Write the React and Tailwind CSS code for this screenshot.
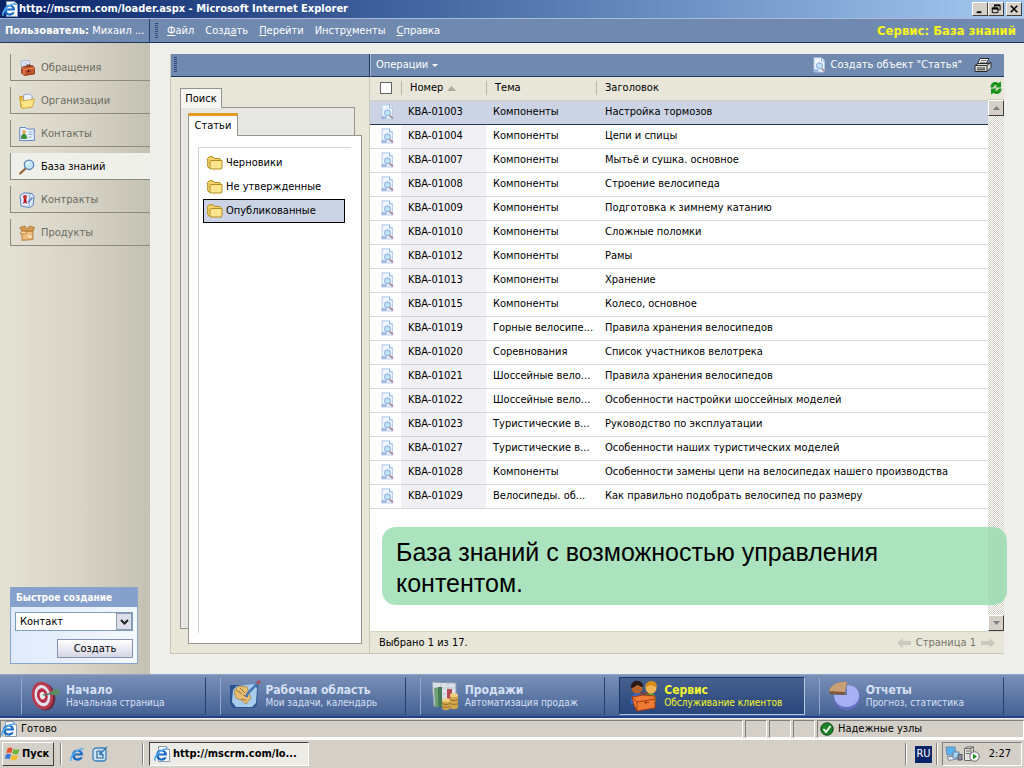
import React, { useState } from 'react';

const sections = [
  { label: 'Обращения', Icon: CaseIcon },
  { label: 'Организации', Icon: OpenFolderIcon },
  { label: 'Контакты', Icon: ContactIcon },
  { label: 'База знаний', Icon: LensIcon },
  { label: 'Контракты', Icon: ContractIcon },
  { label: 'Продукты', Icon: BoxIcon },
];

const folders = ['Черновики', 'Не утвержденные', 'Опубликованные'];

const articles = [
  ['KBA-01003', 'Компоненты', 'Настройка тормозов'],
  ['KBA-01004', 'Компоненты', 'Цепи и спицы'],
  ['KBA-01007', 'Компоненты', 'Мытьё и сушка. основное'],
  ['KBA-01008', 'Компоненты', 'Строение велосипеда'],
  ['KBA-01009', 'Компоненты', 'Подготовка к зимнему катанию'],
  ['KBA-01010', 'Компоненты', 'Сложные поломки'],
  ['KBA-01012', 'Компоненты', 'Рамы'],
  ['KBA-01013', 'Компоненты', 'Хранение'],
  ['KBA-01015', 'Компоненты', 'Колесо, основное'],
  ['KBA-01019', 'Горные велосипе...', 'Правила хранения велосипедов'],
  ['KBA-01020', 'Соревнования', 'Список участников велотрека'],
  ['KBA-01021', 'Шоссейные вело...', 'Правила хранения велосипедов'],
  ['KBA-01022', 'Шоссейные вело...', 'Особенности настройки шоссейных моделей'],
  ['KBA-01023', 'Туристические в...', 'Руководство по эксплуатации'],
  ['KBA-01027', 'Туристические в...', 'Особенности наших туристических моделей'],
  ['KBA-01028', 'Компоненты', 'Особенности замены цепи на велосипедах нашего производства'],
  ['KBA-01029', 'Велосипеды. об...', 'Как правильно подобрать велосипед по размеру'],
];

const areas = [
  { title: 'Начало', note: 'Начальная страница', Icon: TargetIcon },
  { title: 'Рабочая область', note: 'Мои задачи, календарь', Icon: DeskIcon },
  { title: 'Продажи', note: 'Автоматизация продаж', Icon: SalesIcon },
  { title: 'Сервис', note: 'Обслуживание клиентов', Icon: PeopleIcon },
  { title: 'Отчеты', note: 'Прогноз, статистика', Icon: PieIcon },
];

function IeIcon({ page = true }) {
  return (
    <svg viewBox="0 0 16 16" className="size-4 shrink-0">
      {page && <path d="M4.500.5h8L15.500 3.500v12h-11z" fill="#fff" stroke="#8a98b4" />}
      {page && <path d="M12.500.5v3h3" fill="#d4e0f4" stroke="#8a98b4" />}
      <path d="M13 9.500H4.700c.2 3.300 4 3.800 5.200 1.800h2.800C11 16.500 2 15.500 2 9.200 2 2 13.600 2 13 9.500zM4.900 7.500h5.200c-.3-2.600-4.900-2.600-5.200 0z" fill="#1c6cc8" />
      <path d="M1.500 14.800C-1.200 11.500 7 2.200 13.500 3.200" fill="none" stroke="#56aef0" strokeWidth="1.500" />
    </svg>
  );
}

function CaseIcon() {
  return (
    <svg viewBox="0 0 16 16" className="size-4 shrink-0">
      <path d="M2 1l8-.5 1.500 9L3 11z" fill="#f2f6ff" stroke="#90a4cc" strokeWidth=".8" />
      <path d="M3.500 3h5M4 5h5" stroke="#a8b8d8" />
      <path d="M3 7l10.500-1.500L15.500 8v6L5 15.500 2.500 13z" fill="#c4542a" stroke="#7c2c14" strokeWidth=".8" />
      <path d="M3 7l2 2.500L15.500 8M5 9.500v6" fill="none" stroke="#ec9462" />
      <path d="M8 6.500V5h3v1.200M9.500 9.500v3M8 11.200h3.500" fill="none" stroke="#5c1c10" />
    </svg>
  );
}

function OpenFolderIcon() {
  return (
    <svg viewBox="0 0 16 16" className="size-4 shrink-0">
      <path d="M.8 3.500h4l1.500 1.500H13v9H2z" fill="#ecb93c" stroke="#c08c1c" strokeWidth=".8" />
      <path d="M4.500 2l6-1 2.500 2.500v7.500H5z" fill="#edf3ff" stroke="#8098cc" strokeWidth=".8" />
      <path d="M3.500 8L15.500 6 13.500 14 3 15.500.8 5.500z" fill="#fce688" stroke="#d09c28" strokeWidth=".8" />
    </svg>
  );
}

function ContactIcon() {
  return (
    <svg viewBox="0 0 16 16" className="size-4 shrink-0">
      <path d="M.8 1.500h6l1 1.500h7.500v11.500H.8z" fill="#e6f0ff" stroke="#6488c4" />
      <path d="M9.500 6h4M9.500 8.500h4M9.500 11h3" stroke="#8cacdc" />
      <circle cx="5" cy="5.800" r="1.900" fill="#e8a848" />
      <path d="M2.300 12.500c0-6 5.400-6 5.400 0z" fill="#3c9830" stroke="#24681c" strokeWidth=".6" />
    </svg>
  );
}

function LensIcon() {
  return (
    <svg viewBox="0 0 16 16" className="size-4 shrink-0">
      <path d="M6.500 9.500L1.200 14.500" stroke="#9c6434" strokeWidth="2.200" strokeLinecap="round" />
      <circle cx="10" cy="5.800" r="4.700" fill="#c4e6fa" stroke="#5c84b4" strokeWidth="1.300" />
      <path d="M7.500 5.500c.4-1.600 1.600-2.200 3-2" fill="none" stroke="#fff" strokeWidth="1.200" />
    </svg>
  );
}

function ContractIcon() {
  return (
    <svg viewBox="0 0 16 16" className="size-4 shrink-0">
      <path d="M1 3.500L5 .8l8 .7 2 3-1 9-4 2-8-1.500z" fill="#dfeafc" stroke="#5c80c0" />
      <path d="M11 2l-1 12" stroke="#88a8dc" />
      <circle cx="6" cy="5" r="2" fill="#cc2c2c" />
      <path d="M5 6.500h2.200L8 12l-2-1.300L4.200 12z" fill="#b41c24" />
      <path d="M9 10.500l4.500-5" stroke="#5878b0" strokeWidth="1.200" />
    </svg>
  );
}

function BoxIcon() {
  return (
    <svg viewBox="0 0 16 16" className="size-4 shrink-0">
      <path d="M3 6h11v8.500L3 15.300z" fill="#edbd7c" stroke="#a8702c" strokeWidth=".8" />
      <path d="M3 6L.8 2.500 6 1l2 3.500L10.500 1l5 1.500L14 6z" fill="#d89a50" stroke="#a8702c" strokeWidth=".8" />
      <path d="M1 8.500L3 6l5 .5L6.500 9z" fill="#f8d8a0" stroke="#a8702c" strokeWidth=".7" />
      <path d="M9 11.500h3.500" stroke="#fff0d0" strokeWidth="1.500" />
    </svg>
  );
}

function FolderIcon() {
  return (
    <svg viewBox="0 0 16 14" className="h-3.5 w-4 shrink-0">
      <path d="M.7 10.500V2.200L2 .8h4l1.300 1.700h5.500L14 4v7.500l-1 1H2.500z" fill="#f4d468" stroke="#b48c20" />
      <path d="M3 12.500V5.200l1-.7h11v7.500l-1 1H3.500z" fill="#fbe58c" stroke="#b48c20" />
    </svg>
  );
}

function ArticleIcon() {
  return (
    <svg viewBox="0 0 16 16" className="size-4 shrink-0">
      <path d="M3 .8h7.500L13.500 4v11H3z" fill="#ecf4fd" stroke="#b4c8e4" strokeWidth=".9" />
      <path d="M10.500.8V4h3" fill="#fff" stroke="#8cacd8" strokeWidth=".9" />
      <path d="M10.500 11.500l3.500 3" stroke="#a89098" strokeWidth="1.800" />
      <circle cx="8.500" cy="8.800" r="3" fill="#c0e4fa" stroke="#84a8d4" />
      <path d="M2.500 13.500h5" stroke="#84a8dc" strokeWidth="2" />
    </svg>
  );
}

function PrinterIcon() {
  return (
    <svg viewBox="0 0 18 16" className="h-4 w-[18px]">
      <path d="M6 1.500h9L12 7H3.500z" fill="#fff" stroke="#282828" />
      <path d="M7 3.500h5.500M6 5.300h5.500" stroke="#555" strokeWidth=".8" />
      <path d="M1 8.500L4 6.500h10l3-1v5l-4 4H1z" fill="#d8d8d0" stroke="#282828" />
      <path d="M1 8.500h12l4-3M13 8.500v6M3 11h8M3 12.800h8" fill="none" stroke="#383838" />
    </svg>
  );
}

function RefreshIcon() {
  return (
    <svg viewBox="0 0 12 14" className="h-3.5 w-3">
      <path d="M.5 6.500C.5 1 5.500 0 8.500 2L11 .5V6.500H5l1.800-1.800C5 3.800 4 4.800 3.500 6.500z" fill="#18941c" />
      <path d="M11.500 7.500c0 5.500-5 6.500-8 4.500L1 13.500V7.500h6L5.200 9.300C7 10.200 8 9.200 8.500 7.500z" fill="#18941c" />
    </svg>
  );
}

function TargetIcon() {
  return (
    <svg viewBox="0 0 32 32" className="size-8 shrink-0">
      <g transform="rotate(-12 13 16)">
        <ellipse cx="14.500" cy="17" rx="10.500" ry="14" fill="#6c2840" />
        <ellipse cx="12.500" cy="15.500" rx="10.500" ry="14" fill="#b83c50" />
        <ellipse cx="12.500" cy="15.500" rx="7.800" ry="10.800" fill="#e4e0ec" />
        <ellipse cx="12.500" cy="15.500" rx="5.300" ry="7.500" fill="#b83048" />
        <ellipse cx="12.500" cy="15.500" rx="2.600" ry="3.800" fill="#f0e4ec" />
      </g>
      <path d="M13 15l12-2" stroke="#50806c" strokeWidth="1.600" />
      <path d="M20 13l3-3 7-1-1.500 2.500L30 14l-7 1.500z" fill="#5c8c60" />
    </svg>
  );
}

function DeskIcon() {
  return (
    <svg viewBox="0 0 32 32" className="size-8 shrink-0">
      <path d="M1 5h28l-1 20-3 3H4L1 24z" fill="#2c5490" />
      <path d="M8 6l17-2 3 4-1 15-4 4H7l-4-5 1-12z" fill="#a8ccec" />
      <path d="M5 11l5-5 8 1 2 6 2 5-5 6-5-4-5-2z" fill="#e4be74" stroke="#a8803c" strokeWidth=".8" />
      <path d="M7 10l6 4M11 8l5 5M12 19l5 1M14 15l5 2" stroke="#98703c" />
      <path d="M29 3L19 13l-2 4" fill="none" stroke="#4478b8" strokeWidth="2.600" />
      <path d="M31 1l-3 3" stroke="#a85058" strokeWidth="3" />
    </svg>
  );
}

function SalesIcon() {
  return (
    <svg viewBox="0 0 32 32" className="size-8 shrink-0">
      <path d="M3 2l24 1v24L5 26z" fill="#dce0e8" stroke="#8c98ac" />
      <path d="M4 8h22M4 14h22M5 20h21M12 3v23M19 3v23" stroke="#b4bccc" strokeWidth=".7" />
      <path d="M5 8l7-1v20H6z" fill="#6ea078" />
      <path d="M9 7h4v20H9z" fill="#447c54" />
      <path d="M18 9h5v12h-5z" fill="#b84c54" />
      <path d="M13 20v8c0 3 8 3 8 0v-8zM21 15v12c0 3 8 3 8 0V15z" fill="#d0a44c" />
      <path d="M13 23c0 2 8 2 8 0m-8 3c0 2 8 2 8 0m0-7c0 2 8 2 8 0m-8 4c0 2 8 2 8 0" fill="none" stroke="#94702c" />
      <ellipse cx="17" cy="20" rx="4" ry="2" fill="#f0d084" />
      <ellipse cx="25" cy="15" rx="4" ry="2" fill="#f0d084" />
    </svg>
  );
}

function PeopleIcon() {
  return (
    <svg viewBox="0 0 32 32" className="size-8 shrink-0">
      <path d="M3 24c-3-14 14-15 13-2z" fill="#3864c0" />
      <path d="M16 24c-2-15 14-14 12-2z" fill="#50a040" />
      <circle cx="9" cy="8" r="5.500" fill="#b86430" />
      <path d="M3 8c-1-10 13-9 12-1-3 0-4-2-6-2-2 1-3 3-6 3z" fill="#281818" />
      <circle cx="23" cy="8" r="5.500" fill="#f0b458" />
      <path d="M17 7c1-8 12-8 12 0-3 0-5-2-7-2-1 1-3 2-5 2z" fill="#d88c1c" />
      <path d="M4 17l11-2 12 1v12L9 31l-3-6z" fill="#ee7c34" stroke="#a43c14" />
      <path d="M4 17l5 5 18-3M9 22v9M13 15v-2h7v2M18 20v4M16 22.500h5" fill="none" stroke="#a43c14" />
    </svg>
  );
}

function PieIcon() {
  return (
    <svg viewBox="0 0 34 32" className="h-8 w-[34px] shrink-0">
      <path d="M6 17c0 18 27 17 26-1-1-7-6-10-13-10v11z" fill="#6470c0" />
      <path d="M6 15c0 17 27 15 25-1-1-6-6-9-12-9v10z" fill="#a8b0f4" />
      <path d="M1 11C3 5 10 1 19 2l-2 10v3L2 14z" fill="#80583c" />
      <path d="M1 11C3 5 10 1 19 2l-2 10z" fill="#c8a078" />
    </svg>
  );
}

function TitleBar() {
  return (
    <header className="flex h-[18px] items-center bg-linear-to-r from-[#0a246a] to-[#a6caf0] pl-0.5 text-white">
      <IeIcon />
      <h1 className="ml-px flex-1 truncate text-[11px] font-bold">http://mscrm.com/loader.aspx - Microsoft Internet Explorer</h1>
      <div className="flex pr-0.5">
        <WindowButton label="Свернуть"><path d="M3 9h5v2H3z" fill="#000" /></WindowButton>
        <WindowButton label="Восстановить">
          <path d="M5 2.500h6v5H9M5 2v3M2.500 5.500h6v5h-6z" fill="none" stroke="#000" />
          <path d="M4.500 2.500H11M2 6h7" stroke="#000" strokeWidth="2" />
        </WindowButton>
        <span className="w-0.5" />
        <WindowButton label="Закрыть"><path d="M3 3l7 7M10 3l-7 7" stroke="#000" strokeWidth="1.700" /></WindowButton>
      </div>
    </header>
  );
}

function WindowButton({ label, children }) {
  return (
    <button aria-label={label} className="flex h-3.5 w-4 items-center justify-center border border-t-white border-r-[#404040] border-b-[#404040] border-l-white bg-[#d4d0c8]">
      <svg viewBox="0 0 13 13" className="h-3 w-3">{children}</svg>
    </button>
  );
}

function Grip() {
  return <span className="h-4 w-[3px] shrink-0 bg-[repeating-linear-gradient(to_bottom,#2c4a7c_0_1px,#7189b0_1px_2px)]" />;
}

function MenuBar() {
  return (
    <div className="flex h-[25px] shrink-0 items-center border-t border-b border-t-[#a9bbd8] border-b-[#1c3862] bg-[#7089ae] text-white">
      <div className="flex h-full w-[150px] items-center border-r border-[#24426e] pl-[5px] whitespace-nowrap">
        <b>Пользователь:</b>&nbsp;Михаил ...
      </div>
      <span className="ml-[5px] flex"><Grip /></span>
      <nav className="ml-[9px] flex flex-1 gap-[11px]">
        <a href="#file"><u>Ф</u>айл</a>
        <a href="#new">Созд<u>а</u>ть</a>
        <a href="#go"><u>П</u>ерейти</a>
        <a href="#tools">Инстр<u>у</u>менты</a>
        <a href="#help"><u>С</u>правка</a>
      </nav>
      <div className="pr-2 text-[13px] font-bold text-[#f6f61c]">Сервис: База знаний</div>
    </div>
  );
}

function Sidebar() {
  return (
    <aside className="flex w-[150px] shrink-0 flex-col justify-between bg-linear-to-r from-[#e4e2d4] via-[#d8d5c8] to-[#c3c1b3] pb-2.5 pl-2.5 pt-[11px]">
      <nav className="flex flex-col gap-1.5">
        {sections.map(({ label, Icon }) => {
          const active = label === 'База знаний';
          return (
            <a
              key={label}
              href="#section"
              className={`flex h-[27px] items-center gap-1.5 border-b border-l border-[#8c8a7c] pt-0.5 pl-2 ${active ? 'bg-[#f0f0ea] text-black' : 'text-[#6c6a5e]'}`}
            >
              <Icon />
              {label}
            </a>
          );
        })}
      </nav>
      <form className="mr-3 border border-[#8ba4cc] bg-linear-to-r from-[#dfeafb] to-[#f4f8ff]" onSubmit={(e) => e.preventDefault()}>
        <label htmlFor="quick" className="flex h-[19px] items-center bg-[#86a0cc] pl-[5px] text-[10px] font-bold text-white">
          Быстрое создание
        </label>
        <div className="flex flex-col items-end gap-2 px-1 py-[5px]">
          <div className="relative w-full">
            <select id="quick" className="h-[19px] w-full appearance-none border border-[#7f9db9] bg-white pl-1 text-black">
              <option>Контакт</option>
              <option>Организация</option>
            </select>
            <span className="pointer-events-none absolute top-px right-px flex h-[17px] w-4 items-center justify-center border border-[#8c9cb4] bg-[#dcdfe8]">
              <svg viewBox="0 0 9 6" className="h-1.5 w-[9px]"><path d="M1 1l3.500 3.500L8 1" fill="none" stroke="#222" strokeWidth="2" /></svg>
            </span>
          </div>
          <button className="h-[19px] w-[76px] border border-[#8494b0] bg-linear-to-b from-white to-[#d4d6e4] text-black">Создать</button>
        </div>
      </form>
    </aside>
  );
}

function SearchPane({ folder, onFolder }) {
  return (
    <section className="flex w-[199px] shrink-0 flex-col">
      <div className="flex h-[23px] items-center border-r border-b border-[#1c3862] bg-[#7089ae] pl-[3px]"><Grip /></div>
      <div className="flex flex-1 flex-col border-r border-[#c9c7b5] pt-[11px] pr-3.5 pb-6 pl-[9px]">
        <button className="relative z-10 -mb-px h-5 w-[42px] border border-b-0 border-[#96968e] bg-[#f6f6f4]">Поиск</button>
        <div className="flex flex-1 flex-col border border-[#96968e] bg-[#e7e7e3] pt-[5px] pl-[7px]">
          <button className="relative z-10 -mb-px h-[23px] w-[50px] border border-t-[3px] border-b-0 border-[#96968e] border-t-[#e79a20] bg-white">Статьи</button>
          <div className="-mr-2 -mb-4 flex flex-1 flex-col border border-[#96968e] bg-white pt-[11px] pr-2.5 pb-2.5 pl-[9px]">
            <ul className="flex-1 border-t border-l border-[#d4d4d0] pt-[3px]">
              {folders.map((name) => (
                <li key={name} className="pl-1 pr-1.5">
                  <button
                    onClick={() => onFolder(name)}
                    className={`flex h-6 w-full items-center gap-[3px] border pl-[3px] ${folder === name ? 'border-black bg-[#cbd3e4]' : 'border-transparent'}`}
                  >
                    <FolderIcon />
                    {name}
                  </button>
                </li>
              ))}
            </ul>
          </div>
        </div>
      </div>
    </section>
  );
}

function ArticleTable({ selected, onSelect }) {
  return (
    <table className="w-full table-fixed border-collapse text-left">
      <thead>
        <tr className="h-[23px] border-b border-[#cfcdbd] bg-[#e8e6d8]">
          <th className="w-[31px] p-0">
            <input type="checkbox" aria-label="Выбрать все" className="ml-2.5 block size-3 appearance-none border border-[#606060] bg-white" />
          </th>
          <th className="w-[85px] p-0 font-normal">
            <span className="flex items-center gap-1 border-l border-[#bab8a8] pl-2">
              Номер
              <svg viewBox="0 0 9 5" className="h-[5px] w-[9px]"><path d="M0 5L4.500 0 9 5z" fill="#b0aea0" /></svg>
            </span>
          </th>
          <th className="w-[110px] p-0 font-normal"><span className="block border-l border-[#bab8a8] pl-2">Тема</span></th>
          <th className="p-0 font-normal"><span className="block border-l border-[#bab8a8] pl-2">Заголовок</span></th>
        </tr>
      </thead>
      <tbody>
        {articles.map(([number, topic, title]) => {
          const active = number === selected;
          return (
            <tr
              key={number}
              onClick={() => onSelect(number)}
              className={`h-6 border-b ${active ? 'border-[#28344c] bg-[#cbd3e4]' : 'border-[#d6d6d6] bg-white'}`}
            >
              <td className="p-0 pl-[9px]"><ArticleIcon /></td>
              <td className={`p-0 pl-[7px] ${active ? '' : 'bg-[#f1f1f5]'}`}>{number}</td>
              <td className="p-0 pl-[7px] whitespace-nowrap">{topic}</td>
              <td className="p-0 pl-[9px] whitespace-nowrap">{title}</td>
            </tr>
          );
        })}
      </tbody>
    </table>
  );
}

function ScrollButton({ label, children }) {
  return (
    <button aria-label={label} className="flex size-4 items-center justify-center border border-t-white border-r-[#404040] border-b-[#404040] border-l-white bg-[#d4d0c8]">
      <svg viewBox="0 0 7 4" className="h-1 w-[7px]" fill="#808080">{children}</svg>
    </button>
  );
}

function ArticleList() {
  const [selected, setSelected] = useState('KBA-01003');

  return (
    <section className="relative flex min-w-0 flex-1 flex-col">
      <div className="flex h-[23px] items-center border-b border-l border-b-[#1c3862] border-l-[#a9bbd8] bg-[#7089ae] pr-3 pl-[5px] text-white">
        <button className="flex items-center gap-1">
          Операции
          <svg viewBox="0 0 6 3" className="h-[3px] w-1.5"><path d="M0 0h6L3 3z" fill="#fff" /></svg>
        </button>
        <button className="ml-auto flex items-center gap-1"><ArticleIcon />Создать объект "Статья"</button>
        <button aria-label="Печать" className="ml-3"><PrinterIcon /></button>
      </div>
      <div className="flex flex-1 bg-white">
        <div className="min-w-0 flex-1"><ArticleTable selected={selected} onSelect={setSelected} /></div>
        <div className="flex w-4 flex-col">
          <button aria-label="Обновить" className="flex h-[23px] items-center justify-center border-b border-b-[#cfcdbd] bg-[#e8e6d8]"><RefreshIcon /></button>
          <ScrollButton label="Вверх"><path d="M0 4l3.500-4L7 4z" /></ScrollButton>
          <div className="flex-1 bg-[repeating-conic-gradient(#d4d0c8_0_25%,#fff_0_50%)] bg-size-[2px_2px]" />
          <ScrollButton label="Вниз"><path d="M0 0h7L3.500 4z" /></ScrollButton>
        </div>
      </div>
      <footer className="flex h-[22px] items-center justify-between border-t border-[#d6d4c4] px-[9px]">
        <span>Выбрано 1 из 17.</span>
        <span className="flex items-center gap-[5px] text-[#77766c]">
          <PageArrow />
          Страница 1
          <PageArrow next />
        </span>
      </footer>
      <p className="absolute -right-[3px] bottom-12 left-3 rounded-[14px] bg-[#8fdaa8]/75 px-3.5 pt-2.5 pb-1.5 font-['Liberation_Sans',Arial,sans-serif] text-[25px] leading-[31px] text-black">
        База знаний с возможностью управления<br />контентом.
      </p>
    </section>
  );
}

function PageArrow({ next }) {
  return (
    <button aria-label={next ? 'Следующая страница' : 'Предыдущая страница'}>
      <svg viewBox="0 0 14 10" className="h-2.5 w-3.5">
        <path d={next ? 'M14 5L8.500 0v3H0v4h8.500v3z' : 'M0 5l5.500-5v3H14v4H5.500v3z'} fill="#cbc9bd" />
      </svg>
    </button>
  );
}

function AreaBar() {
  return (
    <nav className="flex h-11 shrink-0 items-center gap-3.5 border-t border-b-2 border-t-[#93a6c8] border-b-[#24408c] bg-linear-to-b from-[#7990b8] to-[#456295] pr-5 pl-[21px]">
      {areas.map(({ title, note, Icon }) => {
        const active = title === 'Сервис';
        return (
          <a
            key={title}
            href="#area"
            className={`flex h-[38px] min-w-0 flex-1 items-center gap-1 border pl-2 whitespace-nowrap ${active ? 'border-t-[#1c3464] border-r-[#b4c8e4] border-b-[#b4c8e4] border-l-[#1c3464] bg-linear-to-b from-[#46608f] to-[#28457a] text-[#f4f42c]' : 'border-t-transparent border-r-[#24406e] border-b-[#3c5688] border-l-[#93a8cc] text-[#d6e0f4]'}`}
          >
            <Icon />
            <span className="flex flex-col">
              <b className="text-[12px] leading-[13px]">{title}</b>
              <span className="text-[10px] leading-[11px]">{note}</span>
            </span>
          </a>
        );
      })}
    </nav>
  );
}

function StatusBar() {
  const cell = 'h-[18px] border border-t-[#808080] border-r-white border-b-white border-l-[#808080]';
  return (
    <div className="flex h-5 shrink-0 items-center gap-0.5 border-t border-[#f4f2ec] bg-[#d4d0c8]">
      <div className={`${cell} flex flex-1 items-center gap-1`}><IeIcon />Готово</div>
      <div className={`${cell} w-[22px]`} />
      <div className={`${cell} w-[22px]`} />
      <div className={`${cell} w-[22px]`} />
      <div className={`${cell} flex w-[207px] items-center gap-1 pl-0.5`}>
        <svg viewBox="0 0 14 14" className="size-3.5">
          <circle cx="7" cy="7" r="6.200" fill="#1c8424" stroke="#0c4414" />
          <path d="M3.500 7l2.500 3 4.500-6" fill="none" stroke="#fff" strokeWidth="1.800" />
        </svg>
        Надежные узлы
      </div>
    </div>
  );
}

function Divider() {
  return <span className="h-[22px] w-0.5 border-l border-[#808080] bg-white" />;
}

function Taskbar() {
  return (
    <footer className="flex h-[30px] shrink-0 items-center border-t-2 border-white bg-[#d4d0c8] px-0.5">
      <button className="flex h-6 w-[52px] items-center gap-px border border-t-white border-r-[#404040] border-b-[#404040] border-l-white pl-0.5 font-bold">
        <svg viewBox="0 0 16 16" className="size-4 shrink-0">
          <path d="M2.500 2.500c2-1.500 3.500-1 5 0L6.300 7.300c-1.600-1-3.200-1-5 0z" fill="#e4542c" />
          <path d="M8.500 3c2 1 3.800 1 6 0l-1.300 4.600c-2 1.200-4 1-5.900 0z" fill="#6cb43c" />
          <path d="M1 8.500c1.800-1.200 3.400-1 5 0l-1.300 4.700c-1.500-1-3-1-5 0z" fill="#3c78d4" />
          <path d="M7 9c2 1 3.800 1 6 0l-1.300 4.500c-2 1.200-4 1-6 0z" fill="#f4bc24" />
        </svg>
        Пуск
      </button>
      <span className="mr-2 ml-1.5 flex"><Divider /></span>
      <button aria-label="Internet Explorer"><IeIcon page={false} /></button>
      <button aria-label="Рабочий стол" className="ml-1.5">
        <svg viewBox="0 0 16 16" className="size-4">
          <rect x="1" y="2" width="13" height="13" rx="3" fill="#cbe4f8" stroke="#3c80b8" strokeWidth="1.300" />
          <path d="M5 5h5M5 5v7h6V9" fill="none" stroke="#30648c" strokeWidth="1.200" />
          <path d="M15 1L8 8M8 5v3.500h3.500" fill="none" stroke="#2c70a8" strokeWidth="1.300" />
        </svg>
      </button>
      <span className="mr-[5px] ml-[34px] flex"><Divider /></span>
      <button className="flex h-6 w-40 items-center gap-[3px] border border-t-[#404040] border-r-white border-b-white border-l-[#404040] bg-[#ecebe6] pl-1 font-bold whitespace-nowrap">
        <IeIcon />
        http://mscrm.com/lo...
      </button>
      <span className="ml-auto flex"><Divider /></span>
      <span className="mr-1 ml-2 flex h-[17px] w-[17px] items-center justify-center bg-[#0a246a] text-white">RU</span>
      <Divider />
      <div className="ml-1 flex h-6 w-20 items-center border border-t-[#808080] border-r-white border-b-white border-l-[#808080] pl-0.5">
        <svg viewBox="0 0 18 16" className="h-4 w-[18px]">
          <path d="M1 1h9l1 8H2z" fill="#58b4f0" stroke="#6c88a8" />
          <path d="M2 11l7-1 3 3-8 1.500z" fill="#e4eaf4" stroke="#7888a0" />
          <path d="M8 6h6v6H8z" fill="#a8d8f8" stroke="#6480a4" />
          <path d="M13 8.500h4V14h-4z" fill="#888c98" stroke="#505860" />
        </svg>
        <svg viewBox="0 0 17 16" className="h-4 w-[17px]">
          <path d="M1.500 2.500L4 .8h6.500V12L8 14.500H1.500z" fill="#e4e2dc" stroke="#686868" />
          <path d="M1.500 2.500H8l2.500-1.700M8 2.500v12M3 5h4M3 7.500h4" fill="none" stroke="#686868" />
          <circle cx="11.500" cy="10.500" r="4.700" fill="#fff" stroke="#606060" />
          <path d="M10 7.800l4 2.700-4 2.700z" fill="#189020" />
        </svg>
        <span className="ml-auto pr-2.5">2:27</span>
      </div>
    </footer>
  );
}

export default function App() {
  const [folder, setFolder] = useState('Опубликованные');

  return (
    <div className="flex min-h-screen flex-col bg-[#eeeeea] font-['DejaVu_Sans_Condensed','DejaVu_Sans',sans-serif] text-[11px] leading-[14px] text-black">
      <TitleBar />
      <MenuBar />
      <div className="flex flex-1">
        <Sidebar />
        <main className="mt-[11px] mr-5 mb-5 ml-5 flex min-w-0 flex-1 border-b border-l border-[#c9c7b5] bg-[#e8e6d8]">
          <SearchPane folder={folder} onFolder={setFolder} />
          <ArticleList />
        </main>
      </div>
      <AreaBar />
      <StatusBar />
      <Taskbar />
    </div>
  );
}
